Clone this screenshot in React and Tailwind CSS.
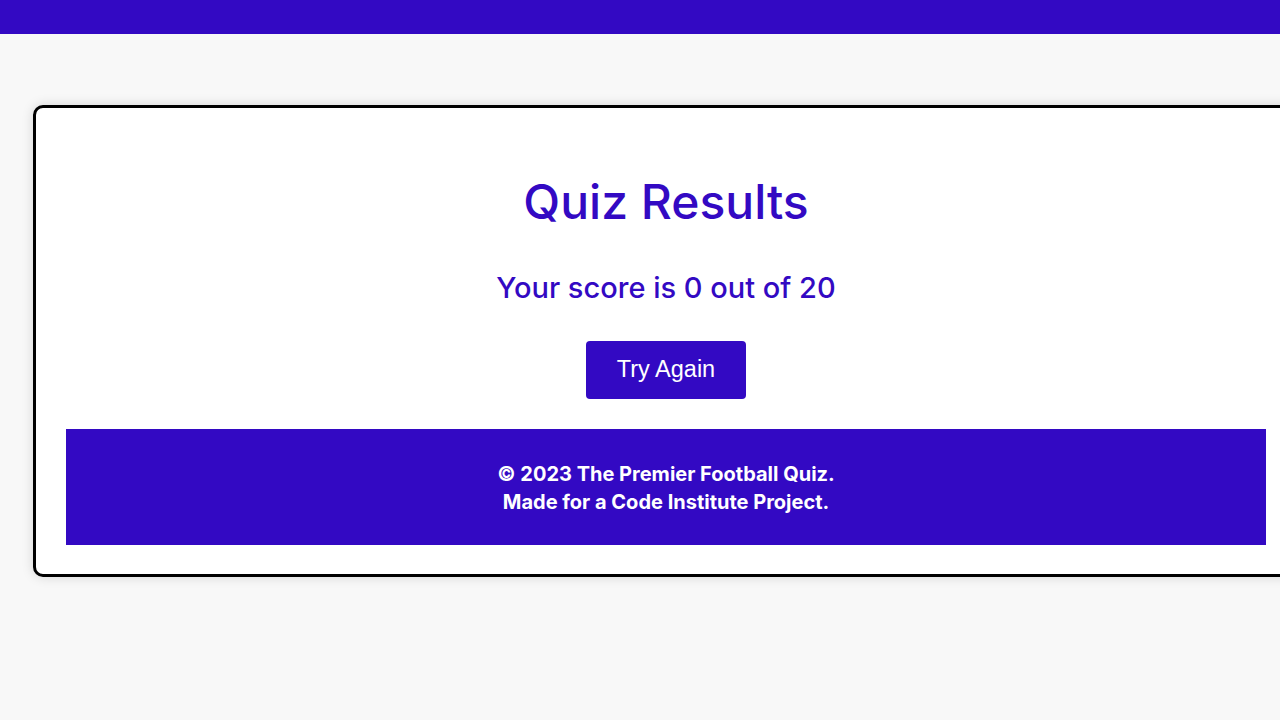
export default function App() {
  return (
    <div className="min-h-[720px] w-full overflow-hidden bg-[#f8f8f8] font-['Inter','Noto_Sans',sans-serif]">
      {/* Barre du haut */}
      <div className="h-[34px] w-full bg-[#3309c3]" />

      <div className="pl-[33px] pt-[71px]">
        <div className="w-[1266px] rounded-[10px] border-[3px] border-black bg-white px-[30px] pt-[65px] pb-[29px] shadow-[0_0_12px_rgba(0,0,0,0.15)]">
          <h1 className="text-center text-[48px] leading-[58px] font-medium text-[#3309c3]">
            Quiz Results
          </h1>
          <p className="mt-[37px] text-center text-[29px] leading-[40px] font-medium text-[#3309c3]">
            Your score is 0 out of 20
          </p>
          <div className="mt-[33px] flex justify-center">
            <button className="h-[58px] w-[160px] rounded-[4px] bg-[#3309c3] font-['Liberation_Sans',Arial,sans-serif] text-[23.5px] text-white">
              Try Again
            </button>
          </div>

          {/* Pied de page */}
          <footer className="mt-[30px] flex h-[116px] flex-col items-center justify-center bg-[#3309c3] pt-[2px] text-center text-[20px] leading-[28px] font-bold text-white">
            <p>© 2023 The Premier Football Quiz.</p>
            <p>Made for a Code Institute Project.</p>
          </footer>
        </div>
      </div>
    </div>
  )
}
